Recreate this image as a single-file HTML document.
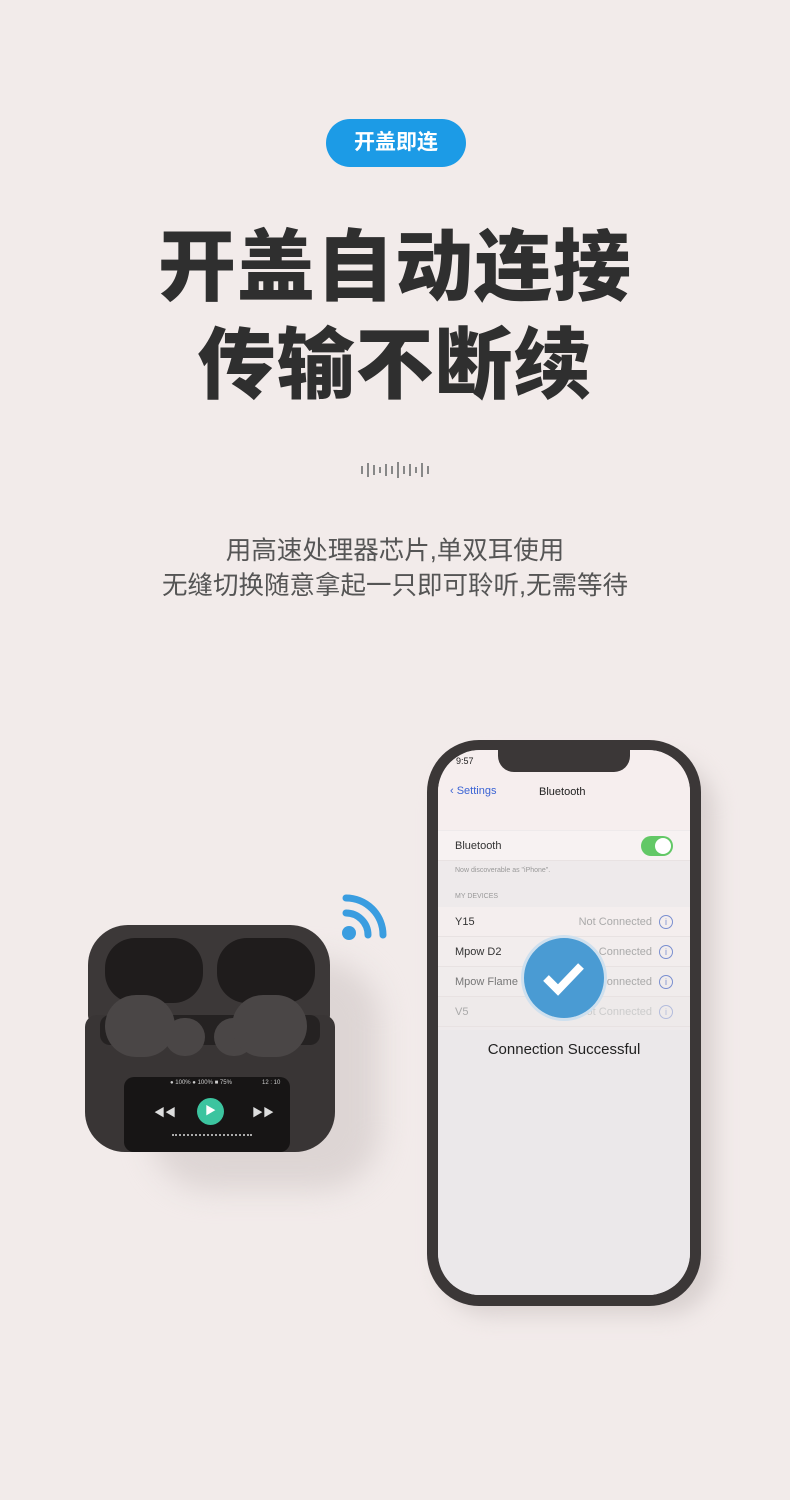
<!DOCTYPE html>
<html><head><meta charset="utf-8"><style>
*{margin:0;padding:0;box-sizing:border-box}
body{width:790px;height:1500px;background:#f2ebea;position:relative;overflow:hidden;font-family:"Liberation Sans","Noto Sans CJK SC",sans-serif}
.abs{position:absolute}
.pill{left:326px;top:119px;width:140px;height:48px;border-radius:24px;background:#1c9be6;color:#fff;font-size:21px;font-weight:bold;text-align:center;line-height:48px}
.h{left:0;width:790px;text-align:center;font-size:78px;font-weight:900;color:#2f2f2f;letter-spacing:1px}
.sub{left:0;width:790px;text-align:center;font-size:25.5px;color:#555;line-height:35px}
.row{position:absolute;left:0;width:252px;height:30px;font-size:11px;color:#333;padding-left:17px;line-height:30px;border-bottom:1px solid #e8e2e2}
.nc{position:absolute;right:38px;top:0;color:#aaa}
.i{position:absolute;right:17px;top:8px;width:14px;height:14px;border:1px solid #7a8fd0;border-radius:50%;font-size:9px;line-height:12px;text-align:center;color:#7a8fd0}
</style></head><body>
<div class="abs pill">开盖即连</div>
<div class="abs h" style="top:222px;line-height:90px">开盖自动连接</div>
<div class="abs h" style="top:320px;line-height:90px">传输不断续</div>
<svg class="abs" style="left:360px;top:460px" width="72" height="20">
<g stroke="#888" stroke-width="2">
<line x1="2" y1="6" x2="2" y2="14"/><line x1="8" y1="3" x2="8" y2="17"/><line x1="14" y1="5" x2="14" y2="15"/><line x1="20" y1="7" x2="20" y2="13"/><line x1="26" y1="4" x2="26" y2="16"/><line x1="32" y1="6" x2="32" y2="14"/><line x1="38" y1="2" x2="38" y2="18"/><line x1="44" y1="6" x2="44" y2="14"/><line x1="50" y1="4" x2="50" y2="16"/><line x1="56" y1="7" x2="56" y2="13"/><line x1="62" y1="3" x2="62" y2="17"/><line x1="68" y1="6" x2="68" y2="14"/></g></svg>
<div class="abs sub" style="top:534px">用高速处理器芯片,单双耳使用<br>无缝切换随意拿起一只即可聆听,无需等待</div>

<div class="abs" style="left:150px;top:960px;width:230px;height:230px;border-radius:60px;background:#ddd5d4;filter:blur(14px)"></div>
<div class="abs" style="left:88px;top:925px;width:242px;height:100px;border-radius:40px 40px 10px 10px;background:#3c3838"></div>
<div class="abs" style="left:105px;top:938px;width:98px;height:65px;border-radius:30px;background:#1f1c1c"></div>
<div class="abs" style="left:217px;top:938px;width:98px;height:65px;border-radius:30px;background:#1f1c1c"></div>
<div class="abs" style="left:85px;top:1015px;width:250px;height:137px;border-radius:12px 12px 40px 40px;background:#393535"></div>
<div class="abs" style="left:100px;top:1015px;width:220px;height:30px;border-radius:10px;background:#252222"></div>
<div class="abs" style="left:105px;top:995px;width:70px;height:62px;border-radius:35px;background:#4a4646"></div>
<div class="abs" style="left:165px;top:1018px;width:40px;height:38px;border-radius:20px;background:#4a4646"></div>
<div class="abs" style="left:214px;top:1018px;width:40px;height:38px;border-radius:20px;background:#4a4646"></div>
<div class="abs" style="left:232px;top:995px;width:75px;height:62px;border-radius:35px;background:#4a4646"></div>
<div class="abs" style="left:124px;top:1077px;width:166px;height:75px;border-radius:10px;background:#171515"></div>
<div class="abs" style="left:170px;top:1080px;font-size:6px;color:#ccc">● 100% ● 100% ■ 75%</div>
<div class="abs" style="left:262px;top:1080px;font-size:6px;color:#ccc">12 : 10</div>
<div class="abs" style="left:154px;top:1104px;font-size:11px;color:#ddd">◀◀</div>
<div class="abs" style="left:252px;top:1104px;font-size:11px;color:#ddd">▶▶</div>
<div class="abs" style="left:197px;top:1098px;width:27px;height:27px;border-radius:50%;background:#3cc49f;color:#fff;font-size:11px;text-align:center;line-height:27px">▶</div>
<div class="abs" style="left:172px;top:1134px;width:80px;border-top:2px dotted #aaa"></div>
<svg class="abs" style="left:338px;top:893px" width="55" height="55"><g fill="none" stroke="#3a9de0" stroke-width="7" stroke-linecap="round"><path d="M8 20 A22 22 0 0 1 30 42"/><path d="M8 5 A37 37 0 0 1 45 42"/></g><circle cx="11" cy="40" r="7" fill="#3a9de0"/></svg>

<div class="abs" style="left:440px;top:760px;width:275px;height:555px;border-radius:50px;background:#d9d1d0;filter:blur(10px)"></div>
<div class="abs" style="left:427px;top:740px;width:274px;height:566px;border-radius:52px;background:#3b3737"></div>
<div class="abs" style="left:438px;top:750px;width:252px;height:545px;border-radius:42px;background:#eeeaeb;overflow:hidden">
 <div class="abs" style="left:0;top:0;width:252px;height:80px;background:#f6eeee"></div>
 <div class="abs" style="left:60px;top:0;width:132px;height:22px;border-radius:0 0 16px 16px;background:#3b3737"></div>
 <div class="abs" style="left:18px;top:6px;font-size:9px;color:#222">9:57</div>
 <div class="abs" style="left:12px;top:35px;font-size:11px;color:#3b64d4">‹ Settings</div>
 <div class="abs" style="left:101px;top:36px;font-size:11px;color:#222">Bluetooth</div>
 <div class="row" style="top:81px;background:#f7f2f2">Bluetooth<div class="abs" style="right:17px;top:5px;width:32px;height:20px;border-radius:10px;background:#62c866"><div class="abs" style="right:2px;top:2px;width:16px;height:16px;border-radius:50%;background:#fff"></div></div></div>
 <div class="abs" style="left:17px;top:117px;font-size:7px;color:#999">Now discoverable as "iPhone".</div>
 <div class="abs" style="left:17px;top:143px;font-size:7px;color:#999">MY DEVICES</div>
 <div class="row" style="top:157px;background:#f4eeee">Y15<span class="nc">Not Connected</span><span class="i">i</span></div>
 <div class="row" style="top:187px;background:#f2eded">Mpow D2<span class="nc">Not Connected</span><span class="i">i</span></div>
 <div class="row" style="top:217px;background:#f0ecec;color:#777">Mpow Flame<span class="nc">Not Connected</span><span class="i">i</span></div>
 <div class="row" style="top:247px;background:#eeeaea;color:#aaa">V5<span class="nc" style="color:#ccc">Not Connected</span><span class="i" style="opacity:.5">i</span></div>
 <div class="abs" style="left:0;top:280px;width:252px;height:265px;background:#ebe8ea"></div>
 <div class="abs" style="left:83px;top:185px;width:86px;height:86px;border-radius:50%;background:#4a9bd3;border:3px solid #cfe0ee"></div>
 <svg class="abs" style="left:103px;top:208px" width="46" height="40"><path d="M5 20 L17 32 L40 8" fill="none" stroke="#fff" stroke-width="8"/></svg>
 <div class="abs" style="left:0;width:252px;top:291px;text-align:center;font-size:15px;color:#222">Connection Successful</div>
</div>
</body></html>
